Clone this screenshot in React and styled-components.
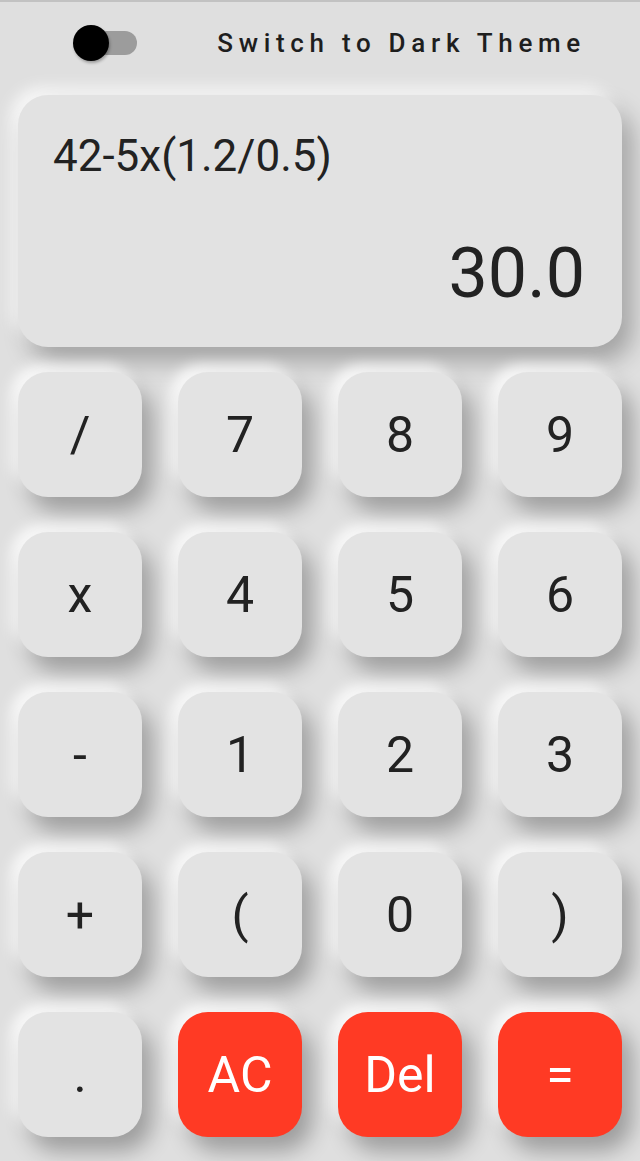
import React, { useState } from "react";
import styled, { createGlobalStyle } from "styled-components";

const GlobalStyle = createGlobalStyle`
  html, body {
    margin: 0;
    padding: 0;
    background: #dfdfdf;
  }
  body {
    font-family: Roboto, "Liberation Sans", sans-serif;
  }
`;

const Page = styled.div`
  min-height: 1161px;
  box-sizing: border-box;
  border-top: 2px solid #c2c2c2;
  background: #dfdfdf;
  padding: 0 18px 20px;
`;

const Header = styled.div`
  display: flex;
  align-items: center;
  justify-content: space-between;
  height: 82px;
  padding: 0 36px 0 55px;
`;

const Toggle = styled.div`
  position: relative;
  width: 64px;
  height: 36px;
  display: flex;
  align-items: center;
`;

const Track = styled.div`
  margin-left: 12px;
  width: 52px;
  height: 24px;
  border-radius: 12px;
  background: #9c9c9c;
`;

const Knob = styled.div`
  position: absolute;
  left: 0;
  top: 0;
  width: 36px;
  height: 36px;
  border-radius: 50%;
  background: #000;
  box-shadow: 1px 2px 3px rgba(0, 0, 0, 0.3);
`;

const ThemeLabel = styled.span`
  font-size: 26px;
  letter-spacing: 5.7px;
  color: #1e1e1e;
  font-weight: 500;
`;

const Display = styled.div`
  margin-top: 11px;
  height: 252px;
  box-sizing: border-box;
  border-radius: 30px;
  background: #e2e2e2;
  box-shadow: 10px 14px 24px rgba(0, 0, 0, 0.28),
    -7px -7px 16px rgba(255, 255, 255, 0.85);
  padding: 35px 37px 0 35px;
  display: flex;
  flex-direction: column;
`;

const Expression = styled.div`
  font-size: 44px;
  color: #222;
`;

const Result = styled.div`
  margin-top: 50px;
  align-self: flex-end;
  font-size: 70px;
  color: #222;
`;

const Keypad = styled.div`
  margin-top: 25px;
  display: grid;
  grid-template-columns: repeat(4, 124px);
  grid-auto-rows: 125px;
  column-gap: 36px;
  row-gap: 35px;
`;

const Key = styled.button`
  border: none;
  border-radius: 30px;
  font-family: Roboto, "Liberation Sans", sans-serif;
  font-size: 50px;
  padding: 0;
  display: flex;
  align-items: center;
  justify-content: center;
  cursor: pointer;
  color: ${(p) => (p.$accent ? "#fff" : "#222")};
  background: ${(p) => (p.$accent ? "#ff3a24" : "#e3e3e3")};
  box-shadow: 10px 14px 22px rgba(0, 0, 0, 0.3),
    -7px -7px 14px rgba(255, 255, 255, 0.85);
`;

const keys = [
  "/", "7", "8", "9",
  "x", "4", "5", "6",
  "-", "1", "2", "3",
  "+", "(", "0", ")",
  ".", "AC", "Del", "=",
];

const accent = ["AC", "Del", "="];

const App = () => {
  const [expr] = useState("42-5x(1.2/0.5)");
  const [result] = useState("30.0");

  return (
    <Page>
      <GlobalStyle />
      <Header>
        <Toggle>
          <Track />
          <Knob />
        </Toggle>
        <ThemeLabel>Switch to Dark Theme</ThemeLabel>
      </Header>
      <Display>
        <Expression>{expr}</Expression>
        <Result>{result}</Result>
      </Display>
      <Keypad>
        {keys.map((k) => (
          <Key key={k} $accent={accent.includes(k)}>
            {k}
          </Key>
        ))}
      </Keypad>
    </Page>
  );
};

export default App;
